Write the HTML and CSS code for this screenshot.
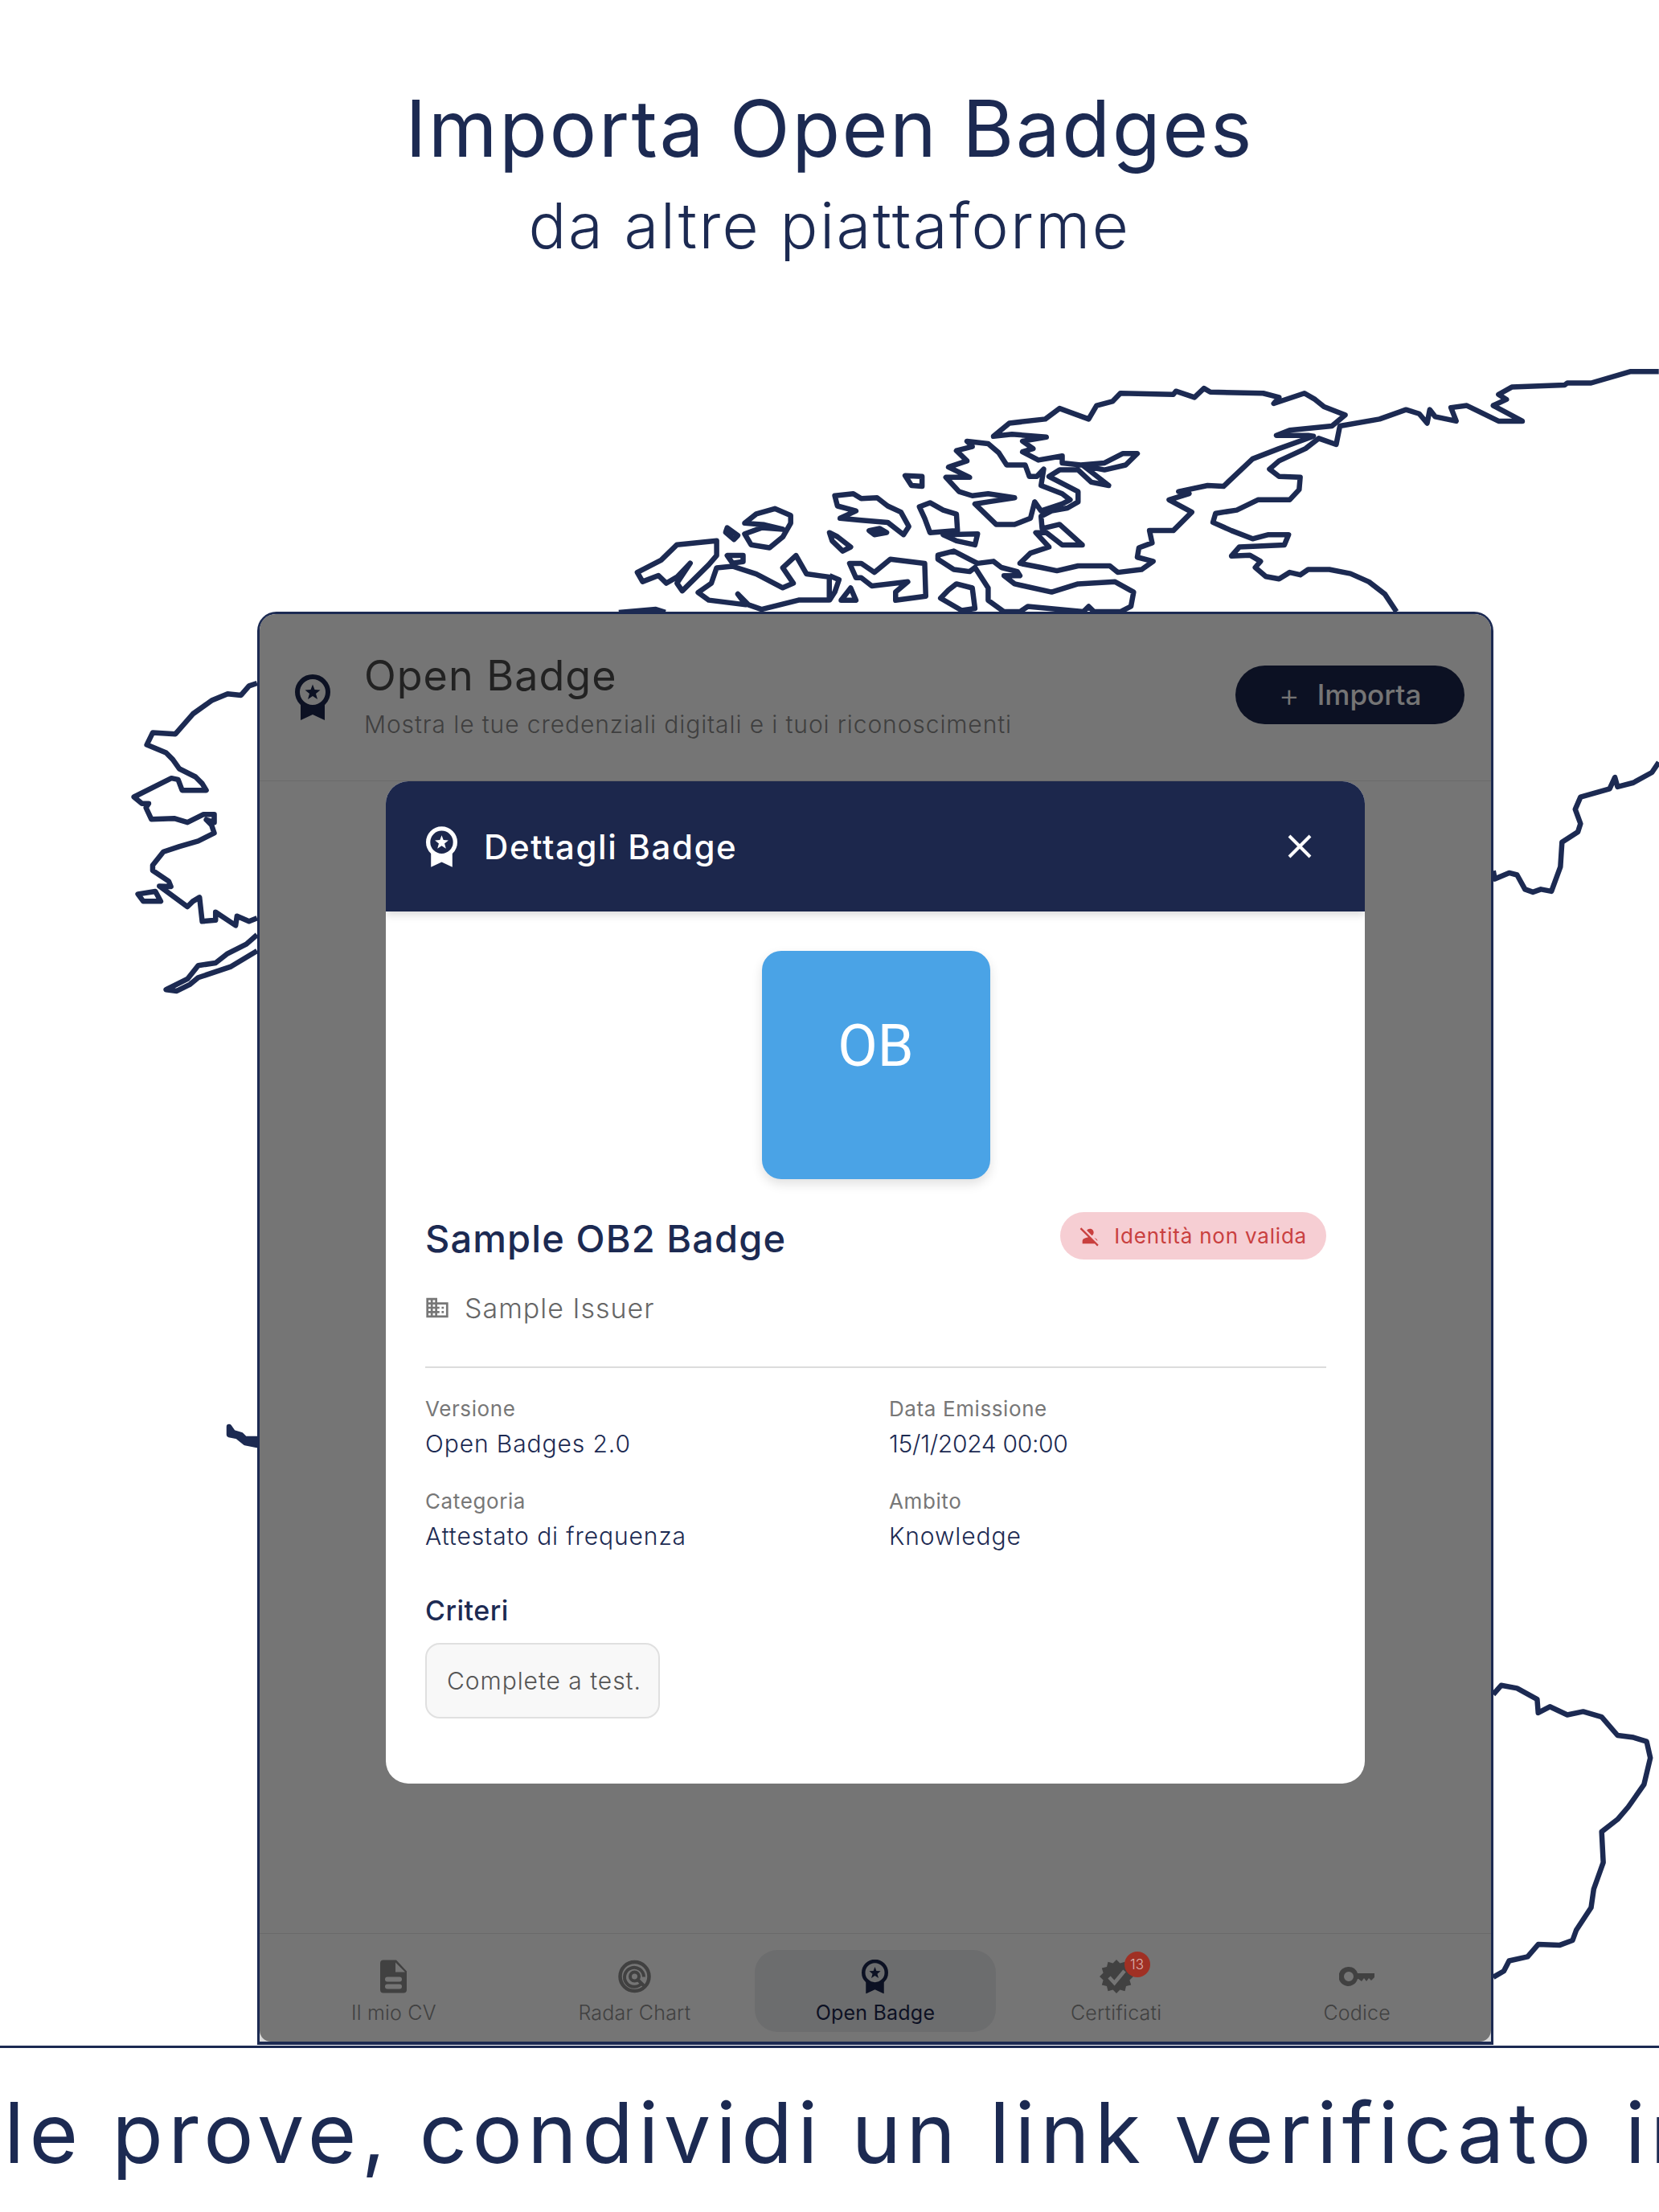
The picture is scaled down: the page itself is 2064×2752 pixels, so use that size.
FILE: index.html
```html
<!DOCTYPE html>
<html lang="en">
  <head>
    <meta charset="UTF-8" />
    <title>Importa Open Badges</title>
    <link rel="stylesheet" href="styles.css">
  </head>
  <body>
    <svg width="0" height="0" class="defs">
      <symbol id="award" viewBox="0 0 44 57">
        <polygon points="7,34 7,57 22,50 37,57 37,34 30,40 22,41 14,40" />
        <circle cx="22" cy="22" r="19" fill="none" stroke="currentColor" stroke-width="6" />
        <polygon points="22,12.5 24.5,19 31.5,19.5 26,24 28,31 22,27 16,31 18,24 12.5,19.5 19.5,19" />
      </symbol>
    </svg>

    <div class="page">
      <!-- world map outline behind the device -->
      <svg class="map" width="2064" height="2752" viewBox="0 0 2064 2752">
        <g transform="translate(1032 400) scale(0.658 0.51)">
          <path d="M915 280 850 310 800 335 745 402 715 400 660 415 680 420 642 435 685 465 650 510 605 510 610 540 585 552 582 575 612 585 590 605 545 612 530 596 470 596 430 608 400 600 360 590 380 565 415 550 390 515 410 515 440 545 478 545 435 495 402 505 400 475 420 462 450 455 470 440 470 415 415 378 435 362 470 362 495 392 528 400 480 352 520 362 560 350 582 322 555 322 520 345 475 350 440 345 440 328 395 338 365 318 385 310 365 292 410 282 345 275 310 280 340 248 408 238 435 212 490 238 505 205 535 195 550 175 650 178 655 170 690 185 708 163 720 172 820 175 850 185 840 200 898 175 918 190 935 208 975 228 950 255 870 265 845 278 905 278Z" />
          <path d="M1072 708 1050 665 1020 635 985 615 945 605 905 605 890 618 870 612 850 628 825 622 805 600 815 585 795 570 760 572 775 550 860 545 868 520 830 520 800 530 760 510 725 490 730 468 770 460 810 435 870 435 888 410 890 380 850 378 832 360 850 340 900 310 925 285 958 300 965 255 1040 238 1090 215 1115 225 1130 248 1135 215 1145 232 1185 243 1175 210 1205 205 1265 243 1310 243 1255 205 1280 190 1265 178 1290 160 1390 155 1395 150 1440 150 1515 122 1568 122" />
          <path d="M260 292 300 298 320 320 335 350 370 350 378 378 392 378 405 360 400 400 440 420 455 435 440 445 400 462 388 440 380 480 350 495 315 495 295 470 275 445 300 440 350 430 300 420 270 425 245 415 220 380 265 380 225 355 260 340 240 315 270 305Z" />
          <path d="M143 376 175 378 175 402 155 400Z" />
          <path d="M10 425 45 420 60 432 90 430 110 450 135 465 150 500 140 520 110 490 60 485 20 480 50 462 15 450Z" />
          <path d="M75 510 95 505 108 515 85 520Z" />
          <path d="M170 452 190 442 215 460 240 470 242 510 190 515 180 480Z" />
          <path d="M215 520 280 518 275 545 240 535Z" />
          <path d="M0 515 15 525 40 550 25 560 5 535Z" />
          <path d="M205 570 235 560 265 580 280 590 310 585 325 600 355 610 360 620 330 620 350 640 420 660 470 640 540 635 575 660 570 695 550 708 500 708 490 695 480 708 375 695 360 708 330 708 300 680 300 650 275 600 265 610 235 605 205 580Z" />
          <path d="M240 640 270 650 275 700 250 705 210 675 225 655Z" />
          <path d="M38 590 60 590 85 612 115 580 180 590 182 670 125 680 125 660 148 635 80 645 60 625 50 625Z" />
          <path d="M40 650 50 680 22 680Z" />
          <path d="M0 620 18 630 10 660 0 680" />
          <path d="M1568 1075 1555 1100 1520 1125 1490 1135 1485 1112 1475 1140 1420 1160 1410 1190 1420 1225 1415 1245 1385 1270 1382 1330 1365 1390 1345 1385 1330 1392 1315 1385 1300 1350 1285 1345 1258 1360 1255 1340" />
        </g>
        <g transform="translate(0 400) scale(0.658 0.383)">
          <path d="M1205 815 1250 775 1280 725 1355 712 1355 760 1340 790 1290 875 1280 850 1305 785 1280 830 1260 850 1245 825 1215 845Z" />
          <path d="M1355 800 1385 795 1430 820 1480 865 1500 850 1480 800 1505 760 1525 820 1568 830 1568 905 1510 905 1440 935 1415 920 1395 885 1410 920 1340 905 1320 880 1345 850Z" />
          <path d="M1375 760 1405 760 1405 780 1385 785Z" />
          <path d="M1375 670 1395 695 1388 708 1372 685Z" />
          <path d="M1408 655 1430 625 1465 608 1495 630 1495 655 1480 700 1455 735 1420 725 1408 690 1440 670 1480 675 1445 660Z" />
          <path d="M1170 945 1240 935 1258 945" />
        </g>
        <g transform="translate(140 820) scale(0.333)">
          <path d="M540 90 510 100 480 135 430 130 370 155 300 205 235 280 150 275 128 320 200 350 225 375 250 410 310 440 335 465 350 490 260 490 245 450 220 445 80 515 110 540 135 540 125 555 145 598 230 595 280 610 340 580 380 580 380 610 350 600 370 620 380 650 320 680 250 700 190 720 150 770 150 790 210 830 218 850 175 848 280 925 300 905 325 890 335 980 385 975 385 945 460 995 465 960 510 980 540 968" />
          <path d="M540 1030 500 1065 430 1100 385 1135 320 1145 280 1195 200 1235 240 1240 290 1215 320 1190 440 1150 540 1090" />
          <path d="M95 878 160 868 180 905 115 905Z" />
        </g>
        <path d="M285 1775 290 1782 300 1785 305 1790 320 1790 320 1798 305 1795 295 1787 285 1785Z" class="solid" />
        <g transform="translate(1032 1700) scale(0.658 0.51)">
          <path d="M1255 800 1270 778 1300 785 1338 812 1340 845 1362 830 1395 850 1425 842 1460 855 1490 900 1520 905 1545 915 1552 955 1540 1020 1510 1075 1490 1105 1460 1135 1463 1210 1445 1275 1440 1320 1412 1375 1405 1400 1380 1412 1340 1410 1320 1440 1285 1450 1275 1475 1255 1490" />
        </g>
      </svg>

      <header class="hero">
        <h1>Importa Open Badges</h1>
        <h2>da altre piattaforme</h2>
      </header>

      <div class="frame">
        <div class="screen">
          <div class="top-bar">
            <svg class="top-icon"><use href="#award" /></svg>
            <div class="top-text">
              <div class="top-title">Open Badge</div>
              <div class="top-sub">Mostra le tue credenziali digitali e i tuoi riconoscimenti</div>
            </div>
            <button class="import-btn"><span class="plus">+</span>Importa</button>
          </div>

          <div class="content"></div>

          <nav class="tabs">
            <a class="tab">
              <svg class="tab-icon" width="33" height="41" viewBox="0 0 33 41">
                <path fill-rule="evenodd" d="M4 0H20L33 14V37a4 4 0 0 1-4 4H4a4 4 0 0 1-4-4V4a4 4 0 0 1 4-4ZM19 3V15H31ZM9 21a2 2 0 0 0 0 6H24a2 2 0 0 0 0-6ZM9 30a2 2 0 0 0 0 6H24a2 2 0 0 0 0-6Z" />
              </svg>
              <span>Il mio CV</span>
            </a>
            <a class="tab">
              <svg class="tab-icon" width="41" height="41" viewBox="0 0 41 41">
                <circle cx="20.5" cy="20.5" r="18" fill="none" stroke="currentColor" stroke-width="4.5" />
                <path d="M30 28A12 12 0 1 1 32 21" fill="none" stroke="currentColor" stroke-width="4" />
                <circle cx="20.5" cy="20.5" r="5.5" fill="none" stroke="currentColor" stroke-width="4" />
                <path d="M23 23 32 32" stroke="currentColor" stroke-width="4" />
              </svg>
              <span>Radar Chart</span>
            </a>
            <a class="tab active">
              <svg class="tab-icon" width="33" height="43" viewBox="0 0 44 57"><use href="#award" /></svg>
              <span>Open Badge</span>
            </a>
            <a class="tab">
              <span class="cert">
                <svg class="tab-icon" width="42" height="42" viewBox="0 0 42 42">
                  <polygon points="42,21 37.4,25.4 39.2,31.5 33,33 31.5,39.2 25.4,37.4 21,42 16.6,37.4 10.5,39.2 9,33 2.8,31.5 4.6,25.4 0,21 4.6,16.6 2.8,10.5 9,9 10.5,2.8 16.6,4.6 21,0 25.4,4.6 31.5,2.8 33,9 39.2,10.5 37.4,16.6" />
                  <path d="M12 22 18.500 29 31 14" fill="none" stroke="#fff" stroke-width="4.500" />
                </svg>
                <span class="count">13</span>
              </span>
              <span>Certificati</span>
            </a>
            <a class="tab">
              <svg class="tab-icon" width="44" height="24" viewBox="0 0 44 24">
                <path fill-rule="evenodd" d="M12 0A12 12 0 0 1 23 8H44V13L40 17 37 14 34 18 31 14 28 18 24 15H23A12 12 0 1 1 12 0ZM12 6A6 6 0 1 0 12 18 6 6 0 0 0 12 6Z" />
              </svg>
              <span>Codice</span>
            </a>
          </nav>

          <!-- dimmed layer with the open dialog -->
          <div class="scrim">
            <div class="modal">
              <div class="modal-head">
                <svg class="modal-award"><use href="#award" /></svg>
                <span class="modal-title">Dettagli Badge</span>
                <svg class="close" width="30" height="30" viewBox="0 0 30 30">
                  <path d="M2 2 28 28M28 2 2 28" />
                </svg>
              </div>
              <div class="modal-body">
                <div class="tile">OB</div>
                <div class="name-row">
                  <div class="badge-name">Sample OB2 Badge</div>
                  <div class="pill">
                    <svg width="28" height="28" viewBox="0 0 24 24">
                      <path d="M8.650 5.820C9.360 4.720 10.600 4 12 4c2.210 0 4 1.790 4 4 0 1.400-.720 2.640-1.820 3.350L8.650 5.820zM20 17.170c-.020-1.100-.630-2.110-1.610-2.620-.540-.280-1.130-.540-1.770-.760L20 17.170zm1.190 4.020L2.810 2.810 1.390 4.220l8.890 8.890c-1.810.230-3.390.790-4.670 1.450C4.610 15.070 4 16.100 4 17.220V20h13.170l2.610 2.610 1.410-1.420z" />
                    </svg>
                    Identità non valida
                  </div>
                </div>
                <div class="issuer">
                  <svg width="30" height="30" viewBox="1 1 22 22">
                    <path d="M12 7V3H2v18h20V7H12zM6 19H4v-2h2v2zm0-4H4v-2h2v2zm0-4H4V9h2v2zm0-4H4V5h2v2zm4 12H8v-2h2v2zm0-4H8v-2h2v2zm0-4H8V9h2v2zm0-4H8V5h2v2zm10 12h-8v-2h2v-2h-2v-2h2v-2h-2V9h8v10zm-2-8h-2v2h2v-2zm0 4h-2v2h2v-2z" />
                  </svg>
                  Sample Issuer
                </div>
                <div class="facts">
                  <div class="fact">
                    <div class="fact-label">Versione</div>
                    <div class="fact-value">Open Badges 2.0</div>
                  </div>
                  <div class="fact">
                    <div class="fact-label">Data Emissione</div>
                    <div class="fact-value fact-date">15/1/2024 00:00</div>
                  </div>
                  <div class="fact">
                    <div class="fact-label">Categoria</div>
                    <div class="fact-value">Attestato di frequenza</div>
                  </div>
                  <div class="fact">
                    <div class="fact-label">Ambito</div>
                    <div class="fact-value">Knowledge</div>
                  </div>
                </div>
                <div class="criteria-title">Criteri</div>
                <div class="criteria">Complete a test.</div>
              </div>
            </div>
          </div>
        </div>
      </div>

      <div class="strip">le prove, condividi un link verificato in</div>
    </div>
  </body>
</html>
```

FILE: styles.css
```css
* {
  box-sizing: border-box;
}

body {
  margin: 0;
  background-color: white;
  font-family: Inter, "Liberation Sans", sans-serif;
  color: #1c2a52;
}

.defs {
  position: absolute;
}

.page {
  position: relative;
  width: 2064px;
  height: 2752px;
  overflow: hidden;
}

.map {
  position: absolute;
  top: 0;
  left: 0;
}

.map path {
  fill: none;
  stroke: #1c2a52;
  stroke-width: 6.5px;
  stroke-linejoin: round;
  vector-effect: non-scaling-stroke;
}

.map path.solid {
  fill: #1c2a52;
}

.hero {
  position: relative;
  height: 761px;
  padding-top: 100px;
  text-align: center;
}

.hero h1 {
  margin: 0;
  font-size: 98px;
  line-height: 120px;
  font-weight: 400;
  letter-spacing: 2.4px;
}

.hero h2 {
  margin: 13px 0 0;
  font-size: 78px;
  line-height: 96px;
  font-weight: 300;
  letter-spacing: 2.4px;
}

.frame {
  position: relative;
  margin-left: 320px;
  width: 1538px;
  height: 1783px;
  border: 3px solid #1c2a52;
  border-bottom-width: 4px;
  border-radius: 24px 24px 0 0;
  background-color: #d8d8d8;
}

.screen {
  position: relative;
  display: flex;
  flex-direction: column;
  height: 100%;
  background-color: white;
  border-radius: 20px 20px 14px 14px;
  overflow: hidden;
}

.top-bar {
  display: flex;
  align-items: center;
  height: 208px;
  padding: 0 33px 0 44px;
  border-bottom: 1px solid #e8e8e8;
  color: #1c274c;
}

.top-icon {
  width: 44px;
  height: 57px;
  fill: currentColor;
  color: #1c274c;
  flex-shrink: 0;
}

.top-text {
  flex: 1;
  margin-left: 42px;
  margin-top: -5px;
}

.top-title {
  font-size: 52px;
  line-height: 60px;
  color: #4a4a4a;
  letter-spacing: 1px;
}

.top-sub {
  margin-top: 12px;
  font-size: 30px;
  line-height: 36px;
  font-weight: 300;
  letter-spacing: 0.9px;
  color: #8a8a8a;
}

.import-btn {
  display: flex;
  align-items: center;
  justify-content: center;
  width: 285px;
  height: 73px;
  margin-top: -6px;
  padding-bottom: 2px;
  border: none;
  border-radius: 37px;
  background-color: #1c274c;
  color: white;
  font-family: inherit;
  font-size: 35px;
  font-weight: 500;
}

.plus {
  margin-right: 22px;
  font-size: 40px;
  font-weight: 300;
}

.content {
  flex: 1;
}

.tabs {
  display: flex;
  height: 135px;
  padding: 20px 17px 12px;
  border-top: 1px solid #e8e8e8;
}

.tab {
  flex: 1;
  display: flex;
  flex-direction: column;
  align-items: center;
  padding-top: 11px;
  border-radius: 28px;
  font-size: 25px;
  line-height: 30px;
  letter-spacing: 0.2px;
  font-weight: 300;
  color: #8e8e8e;
}

.tab-icon {
  display: block;
  height: 44px;
  fill: currentColor;
}

.tab.active {
  background-color: #ecedf0;
  color: #1c274c;
  font-weight: 400;
}

.tab > span:last-child {
  margin-top: 8px;
}

.cert {
  position: relative;
  display: block;
  height: 44px;
}

/* the counter sits above the dimmed layer */
.cert .count {
  position: absolute;
  z-index: 2;
  top: -9px;
  left: 31px;
  width: 32px;
  height: 32px;
  margin-top: 0;
  border-radius: 50%;
  background-color: #a03024;
  color: #d9b5b0;
  font-size: 17px;
  line-height: 32px;
  text-align: center;
  letter-spacing: 0;
}

.scrim {
  position: absolute;
  top: 0;
  left: 0;
  right: 0;
  bottom: 0;
  display: flex;
  justify-content: center;
  align-items: flex-start;
  padding-top: 208px;
  background-color: rgba(0, 0, 0, 0.54);
}

.modal {
  width: 1218px;
  border-radius: 28px;
  background-color: white;
  overflow: hidden;
}

.modal-head {
  display: flex;
  align-items: center;
  height: 162px;
  padding: 0 50px;
  background-color: #1c274c;
  box-shadow: 0 4px 10px rgba(0, 0, 0, 0.15);
  color: white;
}

.modal-award {
  width: 39px;
  height: 51px;
  fill: white;
  color: white;
  flex-shrink: 0;
}

.modal-title {
  flex: 1;
  margin-left: 33px;
  font-size: 42px;
  font-weight: 500;
  letter-spacing: 1.6px;
}

.close {
  margin-right: 16px;
}

.close path {
  fill: none;
  stroke: white;
  stroke-width: 4px;
}

.modal-body {
  padding: 49px 48px 81px 49px;
}

.tile {
  width: 284px;
  height: 284px;
  margin: 0 auto;
  padding-top: 79px;
  border-radius: 24px;
  background-color: #4aa3e6;
  box-shadow: 0 6px 14px rgba(0, 0, 0, 0.12);
  color: white;
  font-family: Roboto, sans-serif;
  font-size: 72px;
  line-height: 80px;
  font-weight: 400;
  text-align: center;
}

.name-row {
  display: flex;
  justify-content: space-between;
  align-items: center;
  height: 59px;
  margin-top: 41px;
}

.badge-name {
  margin-top: 6px;
  font-size: 47px;
  font-weight: 500;
  letter-spacing: 1.1px;
  color: #1c2a52;
}

.pill {
  display: flex;
  align-items: center;
  gap: 16px;
  height: 59px;
  padding: 0 24px 0 23px;
  border-radius: 30px;
  background-color: #f6ced3;
  color: #c9403f;
  font-size: 26px;
  letter-spacing: 0.8px;
}

.pill svg {
  fill: #c9403f;
}

.issuer {
  display: flex;
  align-items: center;
  gap: 19px;
  height: 30px;
  margin-top: 45px;
  font-size: 34px;
  font-weight: 300;
  letter-spacing: 1px;
  color: #666;
}

.issuer svg {
  fill: #777;
}

.facts {
  display: grid;
  grid-template-columns: 577px 1fr;
  row-gap: 36px;
  margin-top: 58px;
  padding-top: 35px;
  border-top: 2px solid #dcdcdc;
}

.fact-label {
  font-size: 26px;
  line-height: 32px;
  letter-spacing: 0.6px;
  color: #777;
}

.fact-value {
  margin-top: 7px;
  font-size: 30px;
  line-height: 40px;
  font-weight: 300;
  letter-spacing: 0.9px;
  color: #1c2a52;
}

.fact-date {
  letter-spacing: -0.3px;
}

.criteria-title {
  margin-top: 53px;
  font-size: 34px;
  line-height: 40px;
  font-weight: 500;
  letter-spacing: 0.5px;
  color: #1c2a52;
}

.criteria {
  display: flex;
  align-items: center;
  width: 292px;
  height: 94px;
  margin-top: 20px;
  padding-left: 25px;
  border: 2px solid #e0e0e0;
  border-radius: 18px;
  background-color: #f8f8f8;
  font-size: 30px;
  font-weight: 300;
  letter-spacing: 0.95px;
  color: #555;
}

.strip {
  position: relative;
  display: flex;
  align-items: center;
  height: 207px;
  margin-top: 1px;
  padding: 6px 0 0 5px;
  border-top: 3px solid #1c2a52;
  background-color: white;
  font-size: 104px;
  font-weight: 400;
  white-space: nowrap;
  letter-spacing: 6.4px;
}
```
